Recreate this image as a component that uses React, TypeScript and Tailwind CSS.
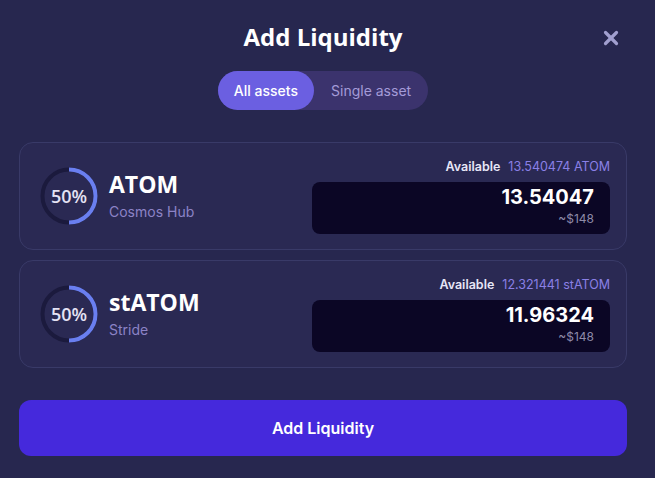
import { X } from "lucide-react";

const TITLE_FONT = { fontFamily: '"Open Sans", "Noto Sans", sans-serif' };

function Ring() {
  return (
    <div className="relative h-[58px] w-[58px] shrink-0">
      <svg width="58" height="58" viewBox="0 0 58 58" className="absolute inset-0">
        <circle cx="29" cy="29" r="26.5" fill="none" stroke="#1b1a3d" strokeWidth="4" />
        <path d="M29 2.5 A26.5 26.5 0 0 1 29 55.5" fill="none" stroke="#6a7ff0" strokeWidth="4" />
      </svg>
      <div
        className="absolute inset-0 flex items-center justify-center text-[18px] font-semibold text-[#e4e2f4]"
        style={TITLE_FONT}
      >
        50%
      </div>
    </div>
  );
}

function AssetRow({
  symbol,
  chain,
  available,
  amount,
}: {
  symbol: string;
  chain: string;
  available: string;
  amount: string;
}) {
  return (
    <div className="flex h-[108px] items-center justify-between rounded-[14px] border border-[#393a68] bg-[#2a2953] pl-[20px] pr-[16px]">
      <div className="flex items-center gap-[11px]">
        <Ring />
        <div className="flex flex-col">
          <span className="text-[23px] font-bold leading-[28px] text-white" style={TITLE_FONT}>
            {symbol}
          </span>
          <span className="mt-[3px] text-[14px] text-[#8c83c6]">{chain}</span>
        </div>
      </div>
      <div className="flex w-[298px] flex-col items-end">
        <div className="mb-[6px] flex items-center gap-[8px] text-[12.5px]">
          <span className="font-semibold text-[#e7e6f7]">Available</span>
          <span className="text-[#8a80e6]">{available}</span>
        </div>
        <div className="flex h-[52px] w-full flex-col items-end rounded-[8px] bg-[#0b0625] pr-[16px] pt-[3px]">
          <span className="text-[20px] font-bold leading-[24px] text-white">{amount}</span>
          <span className="mt-[2px] text-[12px] leading-[15px] text-[#8e8aa8]">~$148</span>
        </div>
      </div>
    </div>
  );
}

export default function App() {
  return (
    <div
      className="flex h-[478px] w-[655px] flex-col bg-[#27274f] pl-[19px] pr-[28px]"
      style={{ fontFamily: 'Inter, "Noto Sans", sans-serif' }}
    >
      <div className="relative flex h-[71px] items-center justify-center pt-[3px]">
        <h1 className="text-[24px] font-bold text-white" style={TITLE_FONT}>
          Add Liquidity
        </h1>
        <X
          className="absolute right-[5px] top-[27px] text-[#a19fcf]"
          size={22}
          strokeWidth={3.5}
        />
      </div>
      <div className="flex justify-center">
        <div className="flex h-[39px] items-center rounded-full bg-[#3b336d] text-[14px]">
          <div className="flex h-full items-center rounded-full bg-[#6b5fe1] px-[16px] font-medium text-white">
            All assets
          </div>
          <div className="px-[17px] text-[#a49bd8]">Single asset</div>
        </div>
      </div>
      <div className="mt-[32px] flex flex-col gap-[10px]">
        <AssetRow symbol="ATOM" chain="Cosmos Hub" available="13.540474 ATOM" amount="13.54047" />
        <AssetRow symbol="stATOM" chain="Stride" available="12.321441 stATOM" amount="11.96324" />
      </div>
      <button
        type="button"
        className="mt-[32px] flex h-[56px] w-full items-center justify-center rounded-[12px] bg-[#4529dc] text-[16px] font-semibold text-white"
      >
        Add Liquidity
      </button>
    </div>
  );
}
